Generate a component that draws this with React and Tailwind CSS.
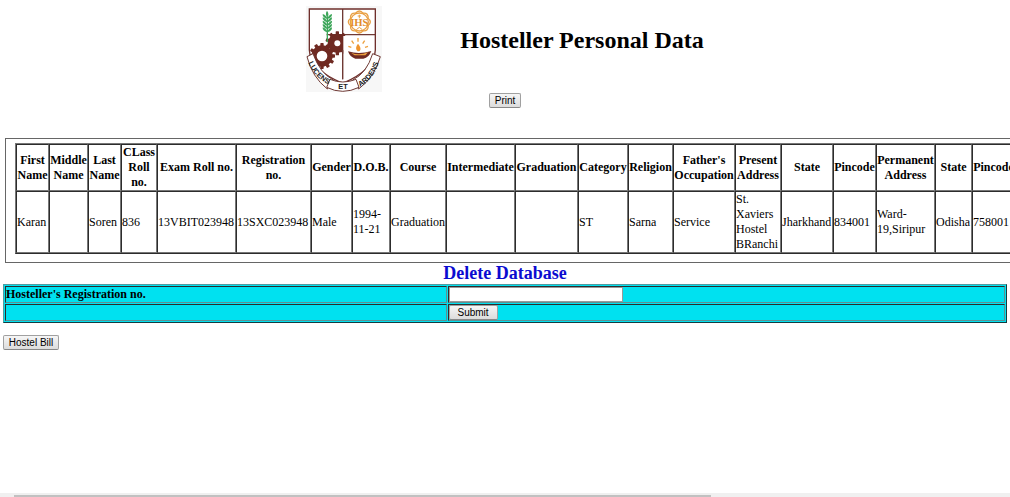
const columns = [
  ["First Name", "Karan", "w-[33px]"],
  ["Middle Name", "", "w-[39px]"],
  ["Last Name", "Soren", "w-[33px]"],
  ["CLass Roll no.", "836", "w-[36px]"],
  ["Exam Roll no.", "13VBIT023948", "w-[79px]"],
  ["Registration no.", "13SXC023948", "w-[75px]"],
  ["Gender", "Male", "w-[41px]"],
  ["D.O.B.", "1994-11-21", "w-[38px]"],
  ["Course", "Graduation", "w-[56px]"],
  ["Intermediate", "", "w-[69px]"],
  ["Graduation", "", "w-[63px]"],
  ["Category", "ST", "w-[50px]"],
  ["Religion", "Sarna", "w-[45px]"],
  ["Father's Occupation", "Service", "w-[62px]"],
  ["Present Address", "St. Xaviers Hostel BRanchi", "w-[46px]"],
  ["State", "Jharkhand", "w-[52px]"],
  ["Pincode", "834001", "w-[43px]"],
  ["Permanent Address", "Ward-19,Siripur", "w-[59px]"],
  ["State", "Odisha", "w-[37px]"],
  ["Pincode", "758001", "w-[43px]"],
];

const buttonClass =
  "h-[15px] rounded-[2px] border border-[#a0a0a0] border-b-[#888] bg-linear-to-b from-[#f6f6f6] to-[#dcdcdc] font-['Liberation_Sans',sans-serif] text-[10px] leading-[13px] text-black";

function Gear({ cx, cy, r, teeth, hole }) {
  const angles = Array.from({ length: teeth }, (_, i) => (i * 360) / teeth);
  return (
    <g fill="#6f2a22">
      {angles.map((a) => (
        <rect key={a} x={cx - 5} y={cy - r - 7} width="10" height="14" rx="2" transform={`rotate(${a} ${cx} ${cy})`} />
      ))}
      <circle cx={cx} cy={cy} r={r} />
      <circle cx={cx} cy={cy} r={hole} fill="#fff" />
    </g>
  );
}

function Crest() {
  return (
    <svg viewBox="18 18 228 258" className="h-[86px] w-[76px] shrink-0" role="img" aria-label="College crest">
      <rect x="18" y="18" width="228" height="258" fill="#f7f7f7" />
      <defs>
        <clipPath id="shield">
          <path d="M28 27H226V150C224 198 180 228 128 250C76 228 30 198 28 150Z" />
        </clipPath>
        <path id="motto-left" d="M25 188Q44 236 92 256" />
        <path id="motto-right" d="M180 260Q220 240 238 184" />
      </defs>
      <path d="M28 27H226V150C224 198 180 228 128 250C76 228 30 198 28 150Z" fill="#fff" />
      <path d="M128 27V238M80 104H226" stroke="#6f3a35" strokeWidth="4" />
      <g clipPath="url(#shield)">
        <Gear cx={112} cy={130} r={29} teeth={10} hole={9} />
        <Gear cx={66} cy={168} r={32} teeth={12} hole={16} />
        <path d="M130 108H226V250H130Z" fill="#fff" />
        <path d="M128 150V238" stroke="#6f3a35" strokeWidth="4" />
      </g>
      <path d="M28 27H226V150C224 198 180 228 128 250C76 228 30 198 28 150Z" fill="none" stroke="#6f2f2b" strokeWidth="4" />
      <g fill="#3da65a">
        <path d="M81 32Q89 43 82 53Q74 43 81 32Z" />
        {[50, 60, 70, 80, 90].map((y) => (
          <g key={y}>
            <path d={`M82 ${y + 7}Q67 ${y + 3} 68 ${y - 8}Q80 ${y - 4} 82 ${y + 7}Z`} />
            <path d={`M82 ${y + 7}Q97 ${y + 3} 96 ${y - 8}Q84 ${y - 4} 82 ${y + 7}Z`} />
          </g>
        ))}
        <path d="M80 50H84V126H80Z" />
      </g>
      <g fill="none" stroke="#e9a044" strokeWidth="4">
        <circle cx="178" cy="66" r="27" />
        {[0, 45, 90, 135, 180, 225, 270, 315].map((a) => (
          <path key={a} d="M166 41Q178 25 190 41" transform={`rotate(${a} 178 66)`} />
        ))}
        <path d="M178 44V55M173 48H183M169 89L178 82L187 89" strokeWidth="3" />
      </g>
      <text x="178" y="78" textAnchor="middle" fill="#e28d2b" className="font-['Liberation_Serif',serif] text-[32px] font-bold">IHS</text>
      <path d="M144 154Q178 164 214 153Q207 173 190 176H166Q150 172 144 154Z" fill="#6f2a22" />
      <path d="M153 158Q178 168 204 157L196 166H164Z" fill="#eda13f" />
      <path d="M173 154Q163 145 174 131Q187 146 178 154Z" fill="#ee942e" />
      <g stroke="#eda13f" strokeWidth="4">
        <path d="M174 114V125M155 122L161 131M194 122L188 131M145 139L154 142M204 139L195 142" />
      </g>
      <g fill="#fff" stroke="#6f3a35" strokeWidth="3" strokeLinejoin="round">
        <path d="M39 161L21 170Q36 231 82 267L100 240Q60 220 39 161Z" />
        <path d="M218 161L241 170Q224 231 176 267L158 240Q200 220 218 161Z" />
        <path d="M90 238Q128 254 168 238L177 262Q128 286 80 262Z" />
      </g>
      <g fill="#222" className="font-['Liberation_Sans',sans-serif] text-[22px] font-bold">
        <text><textPath href="#motto-left">LUCENS</textPath></text>
        <text x="129" y="268" textAnchor="middle">ET</text>
        <text><textPath href="#motto-right">ARDENS</textPath></text>
      </g>
    </svg>
  );
}

const dataCell = "border border-t-[#2c2c2c] border-l-[#2c2c2c] border-r-[#777] border-b-[#777] p-0";
const formCell = "border border-t-[#2c2c2c] border-l-[#2c2c2c] border-r-[#5f8f92] border-b-[#5f8f92] p-0";

export default function App() {
  return (
    <div className="flex min-h-screen flex-col overflow-hidden bg-white font-['Liberation_Serif',serif] text-xs leading-[15px] text-black">
      <header className="flex flex-col items-center pt-1.5">
        <div className="flex gap-[78px]">
          <Crest />
          <h1 className="pt-5 text-2xl leading-7 font-bold">Hosteller Personal Data</h1>
        </div>
        <button type="button" className={`${buttonClass} mt-px w-8`}>Print</button>
      </header>

      <main className="mt-[30px]">
        <section className="overflow-hidden pl-[5px]">
          <div className="w-max border border-[#666] pt-1 pr-2.5 pb-2 pl-[9px]">
            <table className="w-max table-fixed border-separate border-spacing-0 border border-t-[#777] border-r-[#2c2c2c] border-b-[#2c2c2c] border-l-[#777]">
              <colgroup>
                {columns.map(([, , width], i) => (
                  <col key={i} className={width} />
                ))}
              </colgroup>
              <thead>
                <tr className="h-[47px]">
                  {columns.map(([label], i) => (
                    <th key={i} scope="col" className={`${dataCell} text-center font-bold`}>{label}</th>
                  ))}
                </tr>
              </thead>
              <tbody>
                <tr className="h-[62px]">
                  {columns.map(([, value], i) => (
                    <td key={i} className={dataCell}>{value}</td>
                  ))}
                </tr>
              </tbody>
            </table>
          </div>
        </section>

        <form className="px-[3px]" onSubmit={(e) => e.preventDefault()}>
          <h2 className="text-center text-lg leading-[21px] font-bold text-[#0b0bd0]">Delete Database</h2>
          <table className="w-full table-fixed border-separate border-spacing-px border border-t-[#4f9ca0] border-r-[#123c40] border-b-[#123c40] border-l-[#4f9ca0] bg-[#00e1f0]">
            <colgroup>
              <col className="w-[44.2%]" />
              <col />
            </colgroup>
            <tbody>
              <tr className="h-[17px]">
                <td className={formCell}>
                  <label htmlFor="registration" className="block font-bold">Hosteller's Registration no.</label>
                </td>
                <td className={formCell}>
                  <input id="registration" type="text" className="block h-[15px] w-[174px] border border-[#999] bg-white px-0.5" />
                </td>
              </tr>
              <tr className="h-[17px]">
                <td className={formCell}></td>
                <td className={formCell}>
                  <button type="submit" className={`${buttonClass} block w-[49px]`}>Submit</button>
                </td>
              </tr>
            </tbody>
          </table>
        </form>

        <button type="button" className={`${buttonClass} mt-3 ml-[3px] block w-14`}>Hostel Bill</button>
      </main>

      <div className="mt-auto h-1 bg-[#f0f0f0] pt-0.5 pl-3.5">
        <div className="h-0.5 w-[70%] bg-[#c1c1c1]"></div>
      </div>
    </div>
  );
}
